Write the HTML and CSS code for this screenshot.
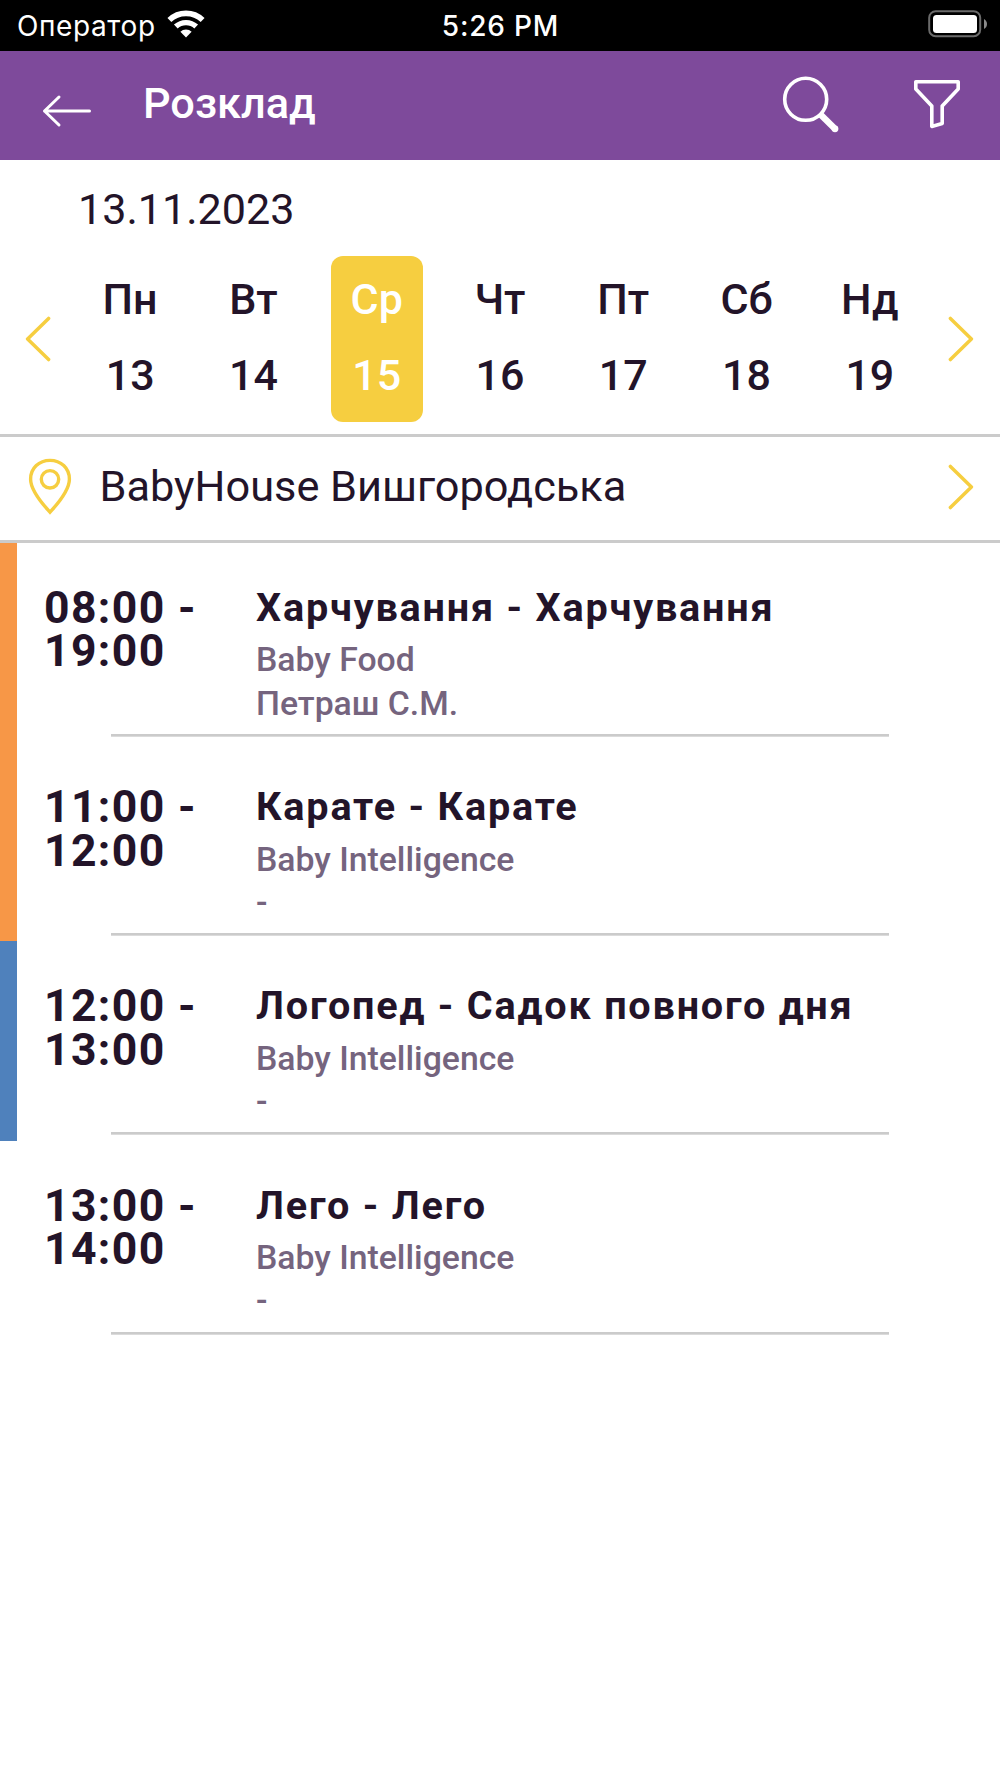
FILE: index.html
```html
<!DOCTYPE html>
<html lang="uk">

<head>
  <meta charset="UTF-8">
  <meta name="viewport" content="width=device-width, initial-scale=1.0">
  <title>Розклад</title>
  <link rel="stylesheet" href="styles.css">
</head>

<body>
  <div class="status-bar">
    <div class="status-left">
      <span class="carrier">Оператор</span>
      <svg class="wifi" width="38" height="28" viewBox="0 0 38 28" fill="none" stroke="#ffffff">
        <path d="M2.4 10a24 24 0 0 1 33.2 0" stroke-width="5.6"/>
        <path d="M8.8 16.6a15 15 0 0 1 20.4 0" stroke-width="5.4"/>
        <path d="M19 27.5l-5.6-5.7a8 8 0 0 1 11.2 0z" fill="#ffffff" stroke="none"/>
      </svg>
    </div>
    <span class="clock">5:26 PM</span>
    <div class="status-right">
      <svg width="60" height="28" viewBox="0 0 60 28">
        <rect x="1.2" y="1.2" width="51" height="25" rx="6.5" fill="none" stroke="#6b6b6b" stroke-width="2"/>
        <rect x="5" y="5" width="44" height="18" rx="3.5" fill="#ffffff"/>
        <path d="M56 9c4 2 4 8 0 10z" fill="#8a8a8a"/>
      </svg>
    </div>
  </div>

  <header class="header">
    <svg class="back" width="50" height="34" viewBox="0 0 50 34" fill="none" stroke="#ffffff" stroke-width="3" stroke-linecap="round" stroke-linejoin="round">
      <path d="M47.5 17H2.5M17 3L2.5 17L17 31"/>
    </svg>
    <h1 class="title">Розклад</h1>
    <svg class="search" width="58" height="58" viewBox="0 0 58 58" fill="none" stroke="#ffffff">
      <circle cx="23.7" cy="23.3" r="21" stroke-width="3.6"/>
      <path d="M38.5 38.5L53.2 53" stroke-width="6.5"/>
      <circle cx="53" cy="52.8" r="3.4" fill="#ffffff" stroke="none"/>
    </svg>
    <svg class="filter" width="48" height="50" viewBox="0 0 48 50" fill="none" stroke="#ffffff" stroke-width="3.6" stroke-linejoin="round">
      <path d="M2.8 2.8H45.2V10L29.2 27V44.6L18.8 47.4V27L2.8 10Z"/>
    </svg>
  </header>

  <section class="calendar">
    <div class="date">13.11.2023</div>
    <div class="week">
      <svg class="arrow" width="26" height="46" viewBox="0 0 26 46"><path d="M23.6 2.4L2.6 23L23.6 43.6"/></svg>
      <div class="days">
        <div class="day"><span>Пн</span><span>13</span></div>
        <div class="day"><span>Вт</span><span>14</span></div>
        <div class="day active"><span>Ср</span><span>15</span></div>
        <div class="day"><span>Чт</span><span>16</span></div>
        <div class="day"><span>Пт</span><span>17</span></div>
        <div class="day"><span>Сб</span><span>18</span></div>
        <div class="day"><span>Нд</span><span>19</span></div>
      </div>
      <svg class="arrow" width="26" height="46" viewBox="0 0 26 46"><path d="M2.4 2.4L23.4 23L2.4 43.6"/></svg>
    </div>
  </section>

  <section class="location">
    <svg class="pin" width="44" height="58" viewBox="0 0 44 58" fill="none" stroke="#f6ce40" stroke-width="3.4">
      <path d="M22 54.2C17.5 49 2.6 34 2.6 21.2C2.6 10 11.2 2.4 22 2.4S41.4 10 41.4 21.2C41.4 34 26.5 49 22 54.2Z"/>
      <circle cx="22" cy="21.3" r="8.7"/>
    </svg>
    <span class="place">BabyHouse Вишгородська</span>
    <svg class="arrow" width="26" height="46" viewBox="0 0 26 46"><path d="M2.4 2.4L23.4 23L2.4 43.6"/></svg>
  </section>

  <main class="schedule">
    <div class="lesson orange">
      <div class="time">08:00 -<br>19:00</div>
      <div class="info">
        <h2>Харчування - Харчування</h2>
        <p>Baby Food</p>
        <p>Петраш С.М.</p>
      </div>
    </div>
    <div class="lesson orange">
      <div class="time">11:00 -<br>12:00</div>
      <div class="info">
        <h2>Карате - Карате</h2>
        <p>Baby Intelligence</p>
        <p>-</p>
      </div>
    </div>
    <div class="lesson blue">
      <div class="time">12:00 -<br>13:00</div>
      <div class="info">
        <h2>Логопед - Садок повного дня</h2>
        <p>Baby Intelligence</p>
        <p>-</p>
      </div>
    </div>
    <div class="lesson">
      <div class="time">13:00 -<br>14:00</div>
      <div class="info">
        <h2>Лего - Лего</h2>
        <p>Baby Intelligence</p>
        <p>-</p>
      </div>
    </div>
  </main>
</body>

</html>
```
FILE: styles.css
```css
* {
  box-sizing: border-box;
}

body {
  font-family: Roboto, 'Liberation Sans', sans-serif;
  font-size: 43.3px;
  line-height: 50px;
  color: #231429;
  background-color: #ffffff;
  margin: 0;
}

svg {
  display: block;
  flex: none;
}

h1,
h2,
p {
  margin: 0;
}

/* Status bar */
.status-bar {
  display: grid;
  grid-template-columns: 1fr auto 1fr;
  align-items: center;
  height: 51px;
  padding: 0 12px 3px 17px;
  background-color: #000000;
  color: #ffffff;
  font-family: Inter, Roboto, sans-serif;
  font-size: 28px;
  line-height: 34px;
}

.status-left {
  display: flex;
  align-items: center;
  gap: 11px;
}

.carrier {
  padding-top: 3px;
  letter-spacing: 0.6px;
}

.clock {
  padding: 3px 4px 0 0;
  font-weight: 500;
  letter-spacing: 0.8px;
}

.status-right {
  justify-self: end;
}

/* Header */
.header {
  display: flex;
  align-items: center;
  height: 108.5px;
  padding: 0 39px 0 42px;
  background-color: #7e4a9b;
  color: #ffffff;
}

.back {
  margin-top: 11px;
}

.title {
  flex: 1;
  margin: -2px 0 0 51px;
  font-size: 43.3px;
  font-weight: 500;
}

.search {
  margin-right: 73px;
}

.filter {
  margin-top: -3px;
}

/* Calendar */
.calendar {
  height: 277.2px;
  border-bottom: 3px solid #cbcbcb;
}

.date {
  padding: 25px 0 21.5px 78px;
  font-size: 43.1px;
}

.week {
  display: flex;
  align-items: center;
  justify-content: space-between;
  padding: 0 26px 0 25px;
}

.days {
  display: grid;
  grid-template-columns: repeat(7, 1fr);
  width: 863px;
  margin-left: 1px;
}

.day {
  display: flex;
  flex-direction: column;
  align-items: center;
  gap: 26px;
  width: 92px;
  height: 166px;
  margin: 0 auto;
  padding-top: 17.5px;
  border-radius: 12px;
  font-size: 43px;
  font-weight: 500;
}

.active {
  background-color: #f6ce40;
  color: #ffffff;
}

.arrow {
  fill: none;
  stroke: #f6ce40;
  stroke-width: 3.5;
  stroke-linecap: round;
  stroke-linejoin: round;
}

/* Location */
.location {
  display: flex;
  align-items: center;
  height: 106.3px;
  padding: 0 26px 2px 27.5px;
  border-bottom: 3px solid #cbcbcb;
}

.place {
  flex: 1;
  margin-left: 28px;
}

/* Schedule */
.lesson {
  display: flex;
  height: 199.25px;
  padding: 43px 0 0 27px;
  border-left: 17px solid transparent;
  background: linear-gradient(#cbcbcb, #cbcbcb) 94px 191px / 778px 2.7px no-repeat;
}

.orange {
  border-left-color: #f79747;
}

.blue {
  border-left-color: #4f81bc;
}

.time {
  width: 212px;
  padding-top: 1px;
  font-size: 44.5px;
  font-weight: 700;
  line-height: 43.5px;
  letter-spacing: 1.4px;
}

.info {
  flex: 1;
  font-size: 33.75px;
  font-weight: 500;
  line-height: 43.3px;
  color: #75647e;
}

.info h2 {
  margin-bottom: 9px;
  font-size: 39.6px;
  font-weight: 700;
  letter-spacing: 1.8px;
  color: #231429;
}
```
